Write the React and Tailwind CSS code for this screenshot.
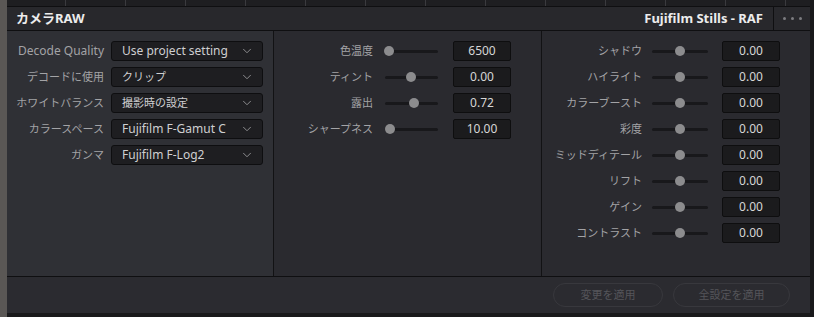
import { ChevronDown } from "lucide-react";

const dropdowns = [
  { label: "Decode Quality", value: "Use project setting" },
  { label: "デコードに使用", value: "クリップ" },
  { label: "ホワイトバランス", value: "撮影時の設定" },
  { label: "カラースペース", value: "Fujifilm F-Gamut C" },
  { label: "ガンマ", value: "Fujifilm F-Log2" },
];

const middle = [
  { label: "色温度", value: "6500", pos: 4 },
  { label: "ティント", value: "0.00", pos: 26 },
  { label: "露出", value: "0.72", pos: 29 },
  { label: "シャープネス", value: "10.00", pos: 5 },
];

const right = [
  "シャドウ",
  "ハイライト",
  "カラーブースト",
  "彩度",
  "ミッドディテール",
  "リフト",
  "ゲイン",
  "コントラスト",
];

// japanese strings read a bit smaller than latin ones in the panel
const isJa = (s) => /[\u3040-\u30ff\u4e00-\u9fff]/.test(s);
const sizeFor = (s) => (isJa(s) ? "text-[11px]" : "text-[12px]");

function Slider({ width, pos }) {
  return (
    <div className="relative h-[20px] flex items-center" style={{ width }}>
      <div className="w-full h-[3px] rounded-full bg-[#18181b]" />
      <div
        className="absolute top-1/2 -translate-y-1/2 -translate-x-1/2 w-[10px] h-[10px] rounded-full bg-[#8c8c8e]"
        style={{ left: pos }}
      />
    </div>
  );
}

function ValueBox({ children }) {
  return (
    <div className="w-[58px] h-[20px] bg-[#1b1b1d] border border-[#0e0e0f] rounded-[2px] flex items-center justify-center text-[12px] text-[#d6d6d6]">
      {children}
    </div>
  );
}

export default function App() {
  return (
    <div
      className="w-[814px] h-[317px] bg-[#19191b] flex overflow-hidden"
      style={{ fontFamily: '"Noto Sans", "Noto Sans CJK JP", sans-serif' }}
    >
      <div className="w-[7px] h-full bg-[#5a5755]" />
      <div className="w-[803px] flex flex-col">
        {/* ruler */}
        <div className="h-[6px] bg-[#1e1e21] flex pl-[58px] gap-[59px]">
          {Array.from({ length: 13 }).map((_, i) => (
            <div key={i} className="w-px h-full bg-[#3a3a3e]" />
          ))}
        </div>
        {/* header */}
        <div className="h-[25px] bg-[#28282c] border-y border-[#0f0f11] flex items-center">
          <div className="pl-[9px] text-[13px] font-bold text-[#ececec] flex-1">カメラRAW</div>
          <div className="text-[13px] font-bold text-[#ececec] pr-[10px]">Fujifilm Stills - RAF</div>
          <div className="h-full w-[37px] border-l border-[#0f0f11] flex items-center justify-center gap-[5px]">
            <span className="w-[3px] h-[3px] rounded-full bg-[#7c7c80]" />
            <span className="w-[3px] h-[3px] rounded-full bg-[#7c7c80]" />
            <span className="w-[3px] h-[3px] rounded-full bg-[#7c7c80]" />
          </div>
        </div>
        {/* body */}
        <div className="h-[246px] flex border-b border-[#0f0f11]">
          <div className="w-[267px] bg-[#2f3035] border-r border-[#121214] pt-[10px] flex flex-col gap-[6px]">
            {dropdowns.map((d) => (
              <div key={d.label} className="flex items-center h-[20px]">
                <div className={`w-[97px] text-right ${sizeFor(d.label)} text-[#a3a3a6] whitespace-nowrap`}>{d.label}</div>
                <div className="ml-[7px] w-[152px] h-[20px] bg-[#1e1e21] border border-[#0e0e10] rounded-[3px] flex items-center pl-[10px] pr-[8px]">
                  <span className={`flex-1 ${sizeFor(d.value)} text-[#cfcfd1] whitespace-nowrap`}>{d.value}</span>
                  <ChevronDown size={14} strokeWidth={1.5} className="text-[#9a9a9d]" />
                </div>
              </div>
            ))}
          </div>
          <div className="w-[268px] bg-[#2a2a2f] border-r border-[#121214] pt-[10px] flex flex-col gap-[6px]">
            {middle.map((m) => (
              <div key={m.label} className="flex items-center h-[20px]">
                <div className="w-[99px] text-right text-[11px] text-[#a3a3a6] whitespace-nowrap">{m.label}</div>
                <div className="ml-[12px]">
                  <Slider width={53} pos={m.pos} />
                </div>
                <div className="ml-[15px]">
                  <ValueBox>{m.value}</ValueBox>
                </div>
              </div>
            ))}
          </div>
          <div className="flex-1 bg-[#2a2a2f] pt-[10px] flex flex-col gap-[6px]">
            {right.map((r) => (
              <div key={r} className="flex items-center h-[20px]">
                <div className="w-[100px] text-right text-[11px] text-[#a3a3a6] whitespace-nowrap">{r}</div>
                <div className="ml-[10px]">
                  <Slider width={56} pos={28} />
                </div>
                <div className="ml-[14px]">
                  <ValueBox>0.00</ValueBox>
                </div>
              </div>
            ))}
          </div>
        </div>
        {/* footer */}
        <div className="h-[36px] bg-[#2b2b30] flex items-center justify-end gap-[10px] pr-[20px]">
          <div className="w-[110px] h-[24px] rounded-full border border-[#38383d] flex items-center justify-center text-[11px] text-[#55555a]">
            変更を適用
          </div>
          <div className="w-[117px] h-[24px] rounded-full border border-[#38383d] flex items-center justify-center text-[11px] text-[#55555a]">
            全設定を適用
          </div>
        </div>
      </div>
    </div>
  );
}
